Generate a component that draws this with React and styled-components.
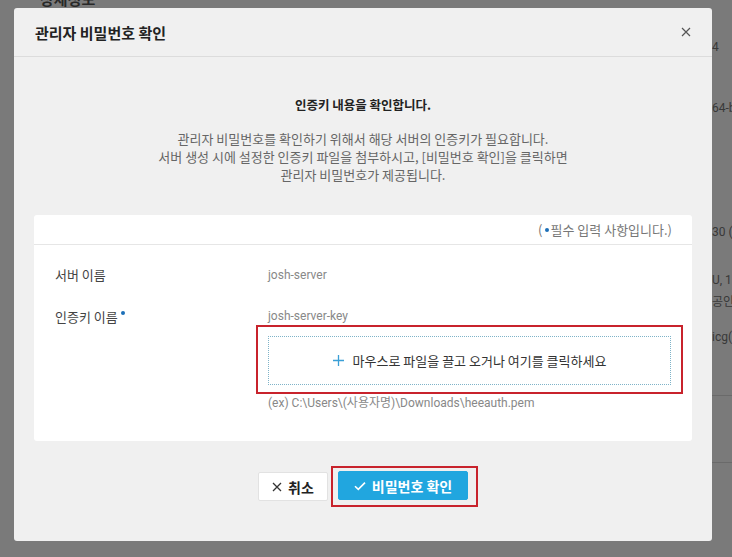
import React from "react";
import styled, { createGlobalStyle } from "styled-components";

const GlobalStyle = createGlobalStyle`
  html, body {
    margin: 0;
    padding: 0;
    overflow: hidden;
  }
  body {
    font-family: "Noto Sans CJK KR", "Noto Sans", sans-serif;
    background: #fff;
  }
`;

const KR = `"Noto Sans CJK KR", "Noto Sans", sans-serif`;
const LATIN = `Roboto, "Noto Sans CJK KR", sans-serif`;

// page behind the dialog
const Page = styled.div`
  position: relative;
  width: 732px;
  height: 557px;
  background: #fff;
  overflow: hidden;
`;

const PageTitle = styled.h2`
  margin: -11px 0 0 40px;
  font-family: ${KR};
  font-size: 15px;
  font-weight: 700;
  line-height: 20px;
  color: #555;
`;

const InfoList = styled.div`
  display: flex;
  flex-direction: column;
  padding: 28px 0 0 712px;
`;

const InfoRow = styled.div`
  height: ${(p) => p.$h}px;
  flex-shrink: 0;
  box-sizing: border-box;
  font-family: ${LATIN};
  font-size: 12px;
  line-height: 20px;
  color: #777;
  white-space: nowrap;
  border-bottom: ${(p) => (p.$line ? "1px solid #ddd" : "none")};
`;

const Overlay = styled.div`
  position: absolute;
  inset: 0;
  background: rgba(0, 0, 0, 0.52);
  display: flex;
  align-items: flex-start;
  padding: 8px 0 0 14px;
`;

const Modal = styled.div`
  width: 698px;
  height: 533px;
  background: #f0f0f0;
  border-radius: 3px;
  display: flex;
  flex-direction: column;
  box-sizing: border-box;
`;

const ModalHeader = styled.div`
  height: 49px;
  box-sizing: border-box;
  border-bottom: 1px solid #dcdcdc;
  display: flex;
  align-items: center;
  justify-content: space-between;
  padding: 0 20px 0 21px;
`;

const ModalTitle = styled.h1`
  margin: 0;
  font-family: ${KR};
  font-size: 15px;
  font-weight: 700;
  color: #222;
`;

const CloseButton = styled.button`
  border: 0;
  background: none;
  padding: 0;
  width: 12px;
  height: 12px;
  display: flex;
  align-items: center;
  justify-content: center;
  cursor: pointer;
`;

const ModalBody = styled.div`
  padding: 39px 20px 0;
  display: flex;
  flex-direction: column;
`;

const Heading = styled.p`
  margin: 0;
  text-align: center;
  font-family: ${KR};
  font-size: 12.5px;
  font-weight: 700;
  line-height: 18px;
  color: #222;
`;

const Description = styled.p`
  margin: 16px 0 0;
  text-align: center;
  font-family: ${KR};
  font-size: 13px;
  line-height: 18px;
  color: #666;
`;

const Card = styled.section`
  margin-top: 31px;
  background: #fff;
  border-radius: 3px;
  height: 226px;
  box-sizing: border-box;
`;

const CardHeader = styled.div`
  height: 30px;
  box-sizing: border-box;
  border-bottom: 1px solid #e6e6e6;
  display: flex;
  align-items: center;
  justify-content: flex-end;
  padding: 0 20px;
  font-family: ${KR};
  font-size: 13px;
  color: #777;
`;

const Dot = styled.span`
  display: inline-block;
  width: 4px;
  height: 4px;
  border-radius: 50%;
  background: #1c6fb8;
  margin: ${(p) => (p.$sup ? "0 0 0 3px" : "0 2px 0 2px")};
  vertical-align: ${(p) => (p.$sup ? "7px" : "middle")};
`;

const CardBody = styled.div`
  padding: 21px 21px 0;
  display: flex;
  flex-direction: column;
  gap: 24px;
`;

const FieldRow = styled.div`
  display: grid;
  grid-template-columns: 213px 1fr;
  align-items: start;
`;

const Label = styled.div`
  font-family: ${KR};
  font-size: 13px;
  line-height: 18px;
  color: #444;
`;

const Value = styled.div`
  font-family: ${LATIN};
  font-size: 12px;
  line-height: ${(p) => p.$lh || 18}px;
  color: #888;
  white-space: nowrap;
`;

const Highlight = styled.div`
  border: 2px solid #c8232c;
  padding: ${(p) => p.$pad};
  margin: ${(p) => p.$margin || 0};
  display: flex;
`;

const DropZone = styled.div`
  flex: 1;
  height: 49px;
  box-sizing: border-box;
  border: 1px dotted #7fb3c8;
  display: flex;
  align-items: center;
  justify-content: center;
  gap: 9px;
  font-family: ${KR};
  font-size: 13px;
  color: #333;
  cursor: pointer;
`;

const ButtonRow = styled.div`
  margin-top: 25px;
  display: flex;
  justify-content: center;
  align-items: center;
  gap: 3px;
  padding-left: 10px;
`;

const Button = styled.button`
  width: ${(p) => p.$w}px;
  height: 29px;
  box-sizing: border-box;
  border-radius: 2px;
  border: 1px solid ${(p) => (p.$primary ? "#21a6df" : "#e2e2e2")};
  background: ${(p) => (p.$primary ? "#21a6df" : "#fff")};
  color: ${(p) => (p.$primary ? "#fff" : "#222")};
  font-family: ${KR};
  font-size: 14px;
  font-weight: 700;
  display: flex;
  align-items: center;
  justify-content: center;
  gap: 6px;
  padding: 0;
  cursor: pointer;
`;

const XIcon = ({ size = 10, color = "#555", width = 1.3 }) => (
  <svg width={size} height={size} viewBox="0 0 10 10">
    <path d="M1 1 L9 9 M9 1 L1 9" stroke={color} strokeWidth={width} fill="none" />
  </svg>
);

const CheckIcon = () => (
  <svg width="12" height="10" viewBox="0 0 12 10">
    <path d="M1 5.2 L4.3 8.4 L11 1.6" stroke="#fff" strokeWidth="1.6" fill="none" />
  </svg>
);

const PlusIcon = () => (
  <svg width="11" height="11" viewBox="0 0 11 11">
    <path d="M5.5 0 V11 M0 5.5 H11" stroke="#3a9fd6" strokeWidth="1.3" fill="none" />
  </svg>
);

const infoRows = [
  { h: 61, text: "4" },
  { h: 124, text: "64-bit" },
  { h: 48, text: "30 (3" },
  { h: 22, text: "U, 1" },
  { h: 35, text: "공인" },
  { h: 69, text: "icg(", line: true },
  { h: 67, text: "", line: true },
];

export default function App() {
  return (
    <>
      <GlobalStyle />
      <Page>
        <PageTitle>상세정보</PageTitle>
        <InfoList>
          {infoRows.map((r, i) => (
            <InfoRow key={i} $h={r.h} $line={r.line}>
              {r.text}
            </InfoRow>
          ))}
        </InfoList>

        <Overlay>
          <Modal>
            <ModalHeader>
              <ModalTitle>관리자 비밀번호 확인</ModalTitle>
              <CloseButton aria-label="닫기">
                <XIcon size={10} color="#555" width={1.2} />
              </CloseButton>
            </ModalHeader>

            <ModalBody>
              <Heading>인증키 내용을 확인합니다.</Heading>
              <Description>
                관리자 비밀번호를 확인하기 위해서 해당 서버의 인증키가 필요합니다.
                <br />
                서버 생성 시에 설정한 인증키 파일을 첨부하시고, [비밀번호 확인]을 클릭하면
                <br />
                관리자 비밀번호가 제공됩니다.
              </Description>

              <Card>
                <CardHeader>
                  (<Dot />필수 입력 사항입니다.)
                </CardHeader>
                <CardBody>
                  <FieldRow>
                    <Label>서버 이름</Label>
                    <Value>josh-server</Value>
                  </FieldRow>
                  <FieldRow>
                    <Label>
                      인증키 이름<Dot $sup />
                    </Label>
                    <div>
                      <Value $lh={17}>josh-server-key</Value>
                      <Highlight $pad="9px 10px 7px" $margin="0 -12px">
                        <DropZone>
                          <PlusIcon />
                          마우스로 파일을 끌고 오거나 여기를 클릭하세요
                        </DropZone>
                      </Highlight>
                      <Value>(ex) C:\Users\(사용자명)\Downloads\heeauth.pem</Value>
                    </div>
                  </FieldRow>
                </CardBody>
              </Card>

              <ButtonRow>
                <Button $w={70}>
                  <XIcon size={10} color="#333" width={1.3} />
                  취소
                </Button>
                <Highlight $pad="3px 8px 5px 5px">
                  <Button $w={130} $primary>
                    <CheckIcon />
                    비밀번호 확인
                  </Button>
                </Highlight>
              </ButtonRow>
            </ModalBody>
          </Modal>
        </Overlay>
      </Page>
    </>
  );
}
